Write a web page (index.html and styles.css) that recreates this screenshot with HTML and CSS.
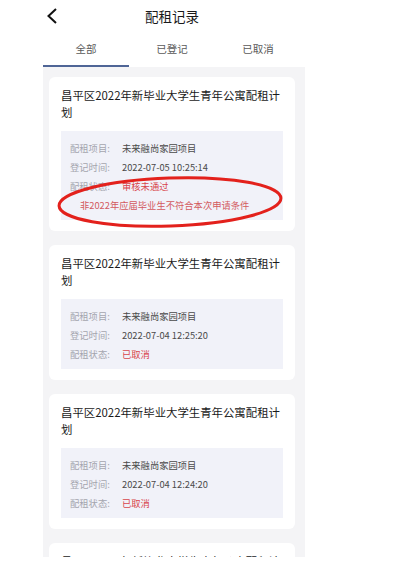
FILE: index.html
```html
<!DOCTYPE html>
<html lang="zh-CN">
<head>
  <meta charset="UTF-8">
  <title>配租记录</title>
  <meta name="viewport" content="width=device-width, initial-scale=1.0">
  <link rel="stylesheet" href="styles.css">
</head>
<body>

  <div class="screen">
    <div class="nav">
      <button class="back-btn" aria-label="返回">
        <svg width="12" height="16" viewBox="0 0 12 16"><path d="M10 1 L2.5 8 L10 15" fill="none" stroke="#111" stroke-width="2"/></svg>
      </button>
      <div class="nav-title">配租记录</div>
      <span></span>
    </div>

    <div class="tabs">
      <div class="tab active">全部</div>
      <div class="tab">已登记</div>
      <div class="tab">已取消</div>
    </div>

    <div class="list">
      <div class="card">
        <div class="card-title">昌平区2022年新毕业大学生青年公寓配租计划</div>
        <div class="info">
          <div class="row"><span class="label">配租项目:</span><span class="value">未来融尚家园项目</span></div>
          <div class="row"><span class="label">登记时间:</span><span class="value">2022-07-05 10:25:14</span></div>
          <div class="row"><span class="label">配租状态:</span><span class="value red">审核未通过</span></div>
          <div class="row note">非2022年应届毕业生不符合本次申请条件</div>
        </div>
        <!-- hand drawn circle on the screenshot -->
        <svg class="mark" width="232" height="60" viewBox="0 0 232 60">
          <ellipse cx="116" cy="30" rx="111" ry="24" transform="rotate(-2 116 30)" fill="none" stroke="#e3211c" stroke-width="3"/>
        </svg>
      </div>

      <div class="card">
        <div class="card-title">昌平区2022年新毕业大学生青年公寓配租计划</div>
        <div class="info">
          <div class="row"><span class="label">配租项目:</span><span class="value">未来融尚家园项目</span></div>
          <div class="row"><span class="label">登记时间:</span><span class="value">2022-07-04 12:25:20</span></div>
          <div class="row"><span class="label">配租状态:</span><span class="value red">已取消</span></div>
        </div>
      </div>

      <div class="card">
        <div class="card-title">昌平区2022年新毕业大学生青年公寓配租计划</div>
        <div class="info">
          <div class="row"><span class="label">配租项目:</span><span class="value">未来融尚家园项目</span></div>
          <div class="row"><span class="label">登记时间:</span><span class="value">2022-07-04 12:24:20</span></div>
          <div class="row"><span class="label">配租状态:</span><span class="value red">已取消</span></div>
        </div>
      </div>

      <div class="card">
        <div class="card-title">昌平区2022年新毕业大学生青年公寓配租计划</div>
      </div>
    </div>
  </div>

</body>
</html>
```

FILE: styles.css
```css
* {
  box-sizing: border-box;
  font-family: "Noto Sans CJK SC", "Noto Sans", sans-serif;
}

body {
  margin: 0;
  padding: 0;
  background: #fff;
  color: #222;
}

.screen {
  width: 262px;
  height: 557px;
  margin-left: 43px;
  overflow: hidden;
  background: #fff;
}

.nav {
  display: grid;
  grid-template-columns: 40px 1fr 40px;
  align-items: center;
  height: 32px;
}

.back-btn {
  background: none;
  border: none;
  padding: 0 0 0 3px;
  margin: 0;
  height: 32px;
  display: flex;
  align-items: center;
  cursor: pointer;
}

.nav-title {
  text-align: center;
  font-size: 13.5px;
  color: #1a1a1a;
  padding-right: 4px;
}

.tabs {
  display: flex;
  height: 35px;
}

.tab {
  width: 86px;
  text-align: center;
  font-size: 10.5px;
  line-height: 33px;
  color: #5a5a5a;
  border-bottom: 2px solid transparent;
}

.tab.active {
  border-bottom-color: #4f6596;
}

.list {
  background: #f4f4f6;
  padding: 10px 10px 0 6px;
  min-height: 490px;
}

.card {
  position: relative;
  background: #fff;
  border-radius: 6px;
  padding: 10px 12px 11px;
  margin-bottom: 14px;
}

.card-title {
  font-size: 11.4px;
  line-height: 16.5px;
  color: #1a1a1a;
  margin-bottom: 11px;
}

.info {
  background: #f1f2f9;
  padding: 8px 9px 5px;
}

.row {
  display: flex;
  font-size: 9.3px;
  line-height: 19px;
}

.label {
  width: 52px;
  color: #a4a5ae;
}

.value {
  color: #4a4a4a;
}

.red {
  color: #d8464c;
}

.row.note {
  padding-left: 10px;
  color: #d35a5e;
}

.mark {
  position: absolute;
  left: 5px;
  top: 95px;
  overflow: visible;
}
```
